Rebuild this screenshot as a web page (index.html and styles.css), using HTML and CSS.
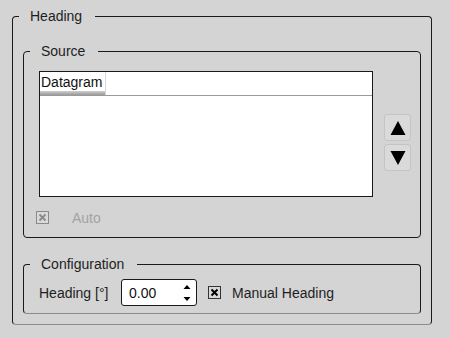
FILE: index.html
```html
<!DOCTYPE html>
<html>
  <head>
    <meta charset='utf-8'/>
    <link rel="stylesheet" href="styles.css">
  </head>
  <body>
    <fieldset class='group outer'>
      <legend>Heading</legend>
      <div class='outer-body'>

        <fieldset class='group source'>
          <legend>Source</legend>
          <div class='source-body'>
            <div class='list-row'>
              <div class='list'>
                <div class='list-head'>
                  <div class='head-cell'>Datagram</div>
                </div>
              </div>
              <div class='move-buttons'>
                <button class='move'>
                  <svg width='16' height='16' viewBox='0 0 16 16'><path d='M8 1 L15.5 15 L0.5 15 Z' fill='#000'/></svg>
                </button>
                <button class='move'>
                  <svg width='16' height='16' viewBox='0 0 16 16'><path d='M0.5 1 L15.5 1 L8 15 Z' fill='#000'/></svg>
                </button>
              </div>
            </div>
            <div class='check-row disabled auto'>
              <span class='check'>
                <svg width='11' height='11' viewBox='0 0 11 11'><path d='M2.5 2.5 L8.5 8.5 M8.5 2.5 L2.5 8.5' stroke='#8a8a8a' stroke-width='1.8'/></svg>
              </span>
              <span class='check-label'>Auto</span>
            </div>
          </div>
        </fieldset>

        <fieldset class='group config'>
          <legend>Configuration</legend>
          <div class='config-body'>
            <span class='field-label'>Heading [°]</span>
            <div class='spinner'>
              <span class='spin-value'>0.00</span>
              <svg class='spin-arrows' width='8' height='18' viewBox='0 0 8 18'>
                <path d='M4 1 L7.5 5 L0.5 5 Z' fill='#000'/>
                <path d='M0.5 13 L7.5 13 L4 17 Z' fill='#000'/>
              </svg>
            </div>
            <div class='check-row manual'>
              <span class='check'>
                <svg width='11' height='11' viewBox='0 0 11 11'><path d='M2.5 2.5 L8.5 8.5 M8.5 2.5 L2.5 8.5' stroke='#000' stroke-width='2'/></svg>
              </span>
              <span class='check-label'>Manual Heading</span>
            </div>
          </div>
        </fieldset>

      </div>
    </fieldset>
  </body>
</html>
```

FILE: styles.css
```css
* {
  box-sizing: border-box;
  font-family: 'Liberation Sans', Arial, sans-serif;
}

body {
  margin: 0;
  padding: 8px 18px 0 12px;
  background: #d4d4d4;
  font-size: 14px;
  color: #1e1e1e;
}

.group {
  margin: 0;
  padding: 0;
  min-width: 0;
  border: 1px solid #1a1a1a;
  border-radius: 4px;
}

.group legend {
  margin-left: 6px;
  padding: 0 13px 0 11px;
  line-height: 16px;
  font-size: 14px;
}

.outer {
  width: 420px;
  border-bottom-color: #8c8c8c;
}

.outer-body {
  padding: 19px 10px 10px 10px;
}

.source-body {
  padding: 12px 8px 13px 15px;
}

.list-row {
  display: flex;
  gap: 11px;
}

.list {
  width: 334px;
  height: 126px;
  background: #fff;
  border: 1px solid #1a1a1a;
}

.list-head {
  display: flex;
  height: 24px;
  border-bottom: 1px solid #9a9a9a;
}

.head-cell {
  width: 66px;
  padding: 2px 0 0 1px;
  line-height: 17px;
  color: #111;
  border-right: 1px solid #d8d8d8;
  background: linear-gradient(#fff 0, #fff 19px, #d0d0d0 19px, #9a9a9a 23px);
}

.move-buttons {
  display: flex;
  flex-direction: column;
  gap: 3px;
  margin-top: 43px;
}

.move {
  width: 27px;
  height: 27px;
  padding: 0;
  display: flex;
  align-items: center;
  justify-content: center;
  background: #dadada;
  border: 1px solid #c4c4c4;
  border-radius: 3px;
}

.check-row {
  display: flex;
  align-items: center;
  height: 13px;
}

.check {
  width: 13px;
  height: 13px;
  display: flex;
  align-items: center;
  justify-content: center;
  background: #d9d9d9;
  border: 1px solid #333;
}

.auto {
  margin: 14px 0 0 -3px;
}

.auto .check {
  border-color: #8a8a8a;
}

.auto .check-label {
  margin-left: 23px;
  color: #a2a2a2;
}

.source {
  border-bottom-color: #1a1a1a;
}

.config {
  margin-top: 18px;
  border-bottom-color: #8c8c8c;
}

.config-body {
  display: flex;
  align-items: center;
  padding: 7px 0 7px 15px;
}

.field-label {
  width: 82px;
}

.spinner {
  width: 76px;
  height: 27px;
  display: flex;
  align-items: center;
  justify-content: space-between;
  padding: 0 5px 0 7px;
  background: #fff;
  border: 1px solid #1a1a1a;
  border-radius: 3px;
  color: #111;
}

.manual {
  margin-left: 11px;
}

.manual .check-label {
  margin-left: 11px;
}
```
